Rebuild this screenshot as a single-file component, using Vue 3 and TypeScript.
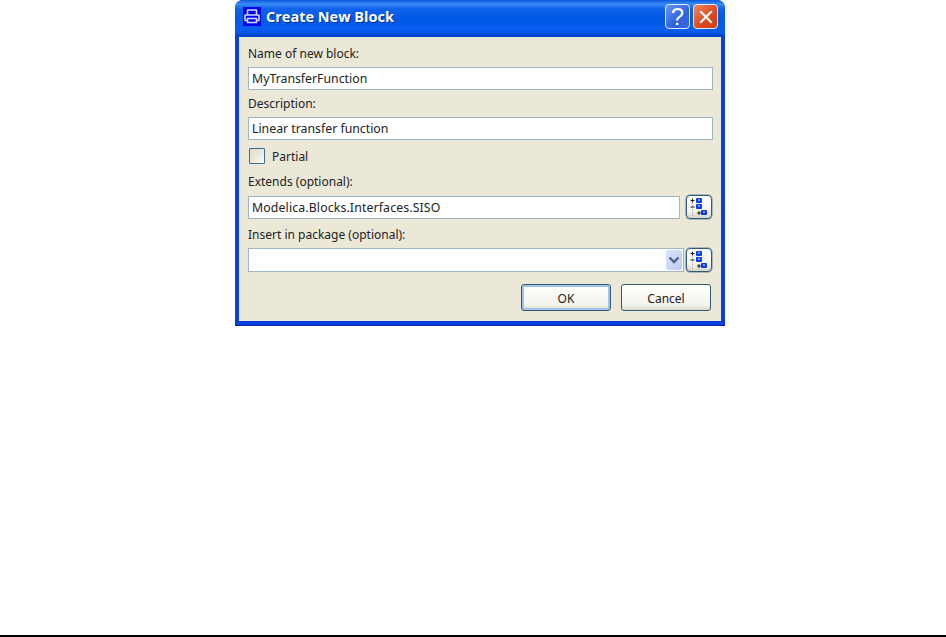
<template>
  <div class="page">
    <div class="window">
      <div class="titlebar">
        <span class="app-icon">
          <svg width="18" height="19" viewBox="0 0 18 19">
            <rect width="18" height="19" fill="#0606e4" />
            <path d="M4.5 8V3.5Q4.5 3 5 3H13Q13.5 3 13.5 3.5V8M4 13.5H2.5Q2 13.5 2 13V8.5Q2 8 2.5 8H15.5Q16 8 16 8.5V13Q16 13.5 15.5 13.5H14M4.5 11.5H13.5V15.5H4.5Z" fill="none" stroke="#cfd8ff" stroke-width="1.6" />
          </svg>
        </span>
        <span class="title">Create New Block</span>
        <button class="cap help">?</button>
        <button class="cap close">
          <svg width="14" height="14" viewBox="0 0 14 14">
            <path d="M2 2L12 12M12 2L2 12" stroke="#fff" stroke-width="2.2" stroke-linecap="square" />
          </svg>
        </button>
      </div>
      <div class="client">
        <label class="lbl">Name of new block:</label>
        <input class="field" :value="name" />
        <label class="lbl second">Description:</label>
        <input class="field desc" :value="description" />
        <div class="check-row">
          <span class="check"></span>
          <span>Partial</span>
        </div>
        <label class="lbl third">Extends (optional):</label>
        <div class="row">
          <input class="field grow" :value="extendsFrom" />
          <button class="browse" v-html="treeIcon"></button>
        </div>
        <label class="lbl fourth">Insert in package (optional):</label>
        <div class="row">
          <div class="combo">
            <span class="arrow">
              <svg width="12" height="8" viewBox="0 0 12 8">
                <path d="M1.5 1.5L6 6L10.5 1.5" fill="none" stroke="#4d6185" stroke-width="2.4" />
              </svg>
            </span>
          </div>
          <button class="browse" v-html="treeIcon"></button>
        </div>
        <div class="actions">
          <button class="btn default">OK</button>
          <button class="btn">Cancel</button>
        </div>
      </div>
    </div>
    <div class="rule"></div>
  </div>
</template>

<script setup lang="ts">
const name = 'MyTransferFunction'
const description = 'Linear transfer function'
const extendsFrom = 'Modelica.Blocks.Interfaces.SISO'

// same little tree icon on both browse buttons
const treeIcon = `<svg width="18" height="18" viewBox="0 0 18 18">
  <path d="M2.5 5V18" stroke="#a8a898" stroke-width="1" stroke-dasharray="1 1" />
  <path d="M0.5 2.5H4.5M2.5 0.5V4.5M0.5 9H4.5M7 15H11M9 13V17" stroke="#1c1c1c" stroke-width="1" />
  <rect x="6" y="0" width="6" height="5" rx="1" fill="#0a3cf0" />
  <rect x="8" y="1" width="2" height="2" fill="#6f9cff" />
  <rect x="6" y="6" width="6" height="5" rx="1" fill="#0a3cf0" />
  <rect x="8" y="7" width="2" height="2" fill="#6f9cff" />
  <rect x="11" y="12" width="6" height="5" rx="1" fill="#0a3cf0" />
  <rect x="13" y="13" width="2" height="2" fill="#6f9cff" />
</svg>`
</script>

<style>
html,
body {
  margin: 0;
  background: #fff;
  overflow: hidden;
}
</style>

<style scoped>
.page {
  height: 637px;
  display: flex;
  flex-direction: column;
  justify-content: space-between;
  font-family: "Noto Sans", "Open Sans", sans-serif;
  font-size: 12px;
  color: #222;
}

.window {
  width: 490px;
  height: 326px;
  margin-left: 235px;
  box-sizing: border-box;
  display: flex;
  flex-direction: column;
  background: #0a3fdc;
  border-bottom: 1px solid #0a2aa8;
  border-radius: 8px 8px 0 0;
  overflow: hidden;
}

.titlebar {
  height: 37px;
  flex: none;
  box-sizing: border-box;
  display: flex;
  align-items: center;
  padding: 0 7px 4px 8px;
  background: linear-gradient(#0a58dc 0, #3a8cf6 4px, #0f62ea 9px, #0058e6 20px, #0a5ef0 30px, #0043c8 37px);
}

.app-icon {
  width: 18px;
  height: 19px;
  flex: none;
  display: flex;
}

.title {
  flex: 1;
  margin-left: 5px;
  font-family: "Open Sans", "Noto Sans", sans-serif;
  font-weight: 700;
  font-size: 14.5px;
  color: #fff;
  text-shadow: 1px 1px 0 #0a2f9c;
}

.cap {
  width: 25px;
  height: 25px;
  flex: none;
  padding: 0;
  border: 1px solid #dfe9ff;
  border-radius: 4px;
  display: flex;
  align-items: center;
  justify-content: center;
  font-family: "Liberation Sans", sans-serif;
  font-size: 24px;
  line-height: 1;
  color: #fff;
}

.help {
  background: linear-gradient(135deg, #6a96f0, #2f62dc 60%, #3468e0);
}

.close {
  margin-left: 3px;
  background: linear-gradient(135deg, #ee8a66, #d9481c 60%, #d04010);
}

.client {
  flex: 1;
  margin: 0 4px 4px;
  padding: 9px 8px 0 9px;
  background: #ebe8d8;
  display: flex;
  flex-direction: column;
}

.lbl {
  height: 16px;
  line-height: 16px;
  margin-bottom: 5px;
}

.second {
  margin-top: 6px;
  margin-bottom: 5px;
}

.third {
  margin-top: 10px;
  margin-bottom: 5px;
}

.fourth {
  margin-top: 8px;
  margin-bottom: 5px;
}

.field {
  height: 23px;
  box-sizing: border-box;
  width: 100%;
  padding: 0 3px;
  border: 1px solid #a0b4c8;
  background: #fff;
  font: inherit;
  font-size: 12.3px;
  color: #222;
  outline: none;
}

.check-row {
  height: 16px;
  margin: 8px 0 0 1px;
  display: flex;
  align-items: center;
  gap: 7px;
}

.check {
  width: 16px;
  height: 16px;
  box-sizing: border-box;
  border: 1px solid #3e6a8c;
  border-radius: 1px;
  background: linear-gradient(135deg, #dedacb, #f8f8f4);
}

.row {
  height: 24px;
  display: flex;
  align-items: center;
  justify-content: space-between;
}

.grow {
  flex: 1;
  width: auto;
  min-width: 0;
  margin-right: 6px;
  letter-spacing: 0.13px;
}

.combo {
  width: 436px;
  height: 24px;
  flex: none;
  box-sizing: border-box;
  border: 1px solid #a0b4c8;
  background: #fff;
  display: flex;
  justify-content: flex-end;
  align-items: center;
  padding-right: 1px;
}

.arrow {
  width: 16px;
  height: 20px;
  background: linear-gradient(135deg, #dbe4f8, #bccdf2);
  border-radius: 2px;
  display: flex;
  align-items: center;
  justify-content: center;
}

.browse {
  width: 26px;
  height: 24px;
  flex: none;
  margin-right: 1px;
  padding: 0;
  border: 1px solid #2f5a78;
  border-radius: 4px;
  background: linear-gradient(#fff, #f4f3ea 70%, #d8d5c6);
  box-shadow: 0 0 0 0.5px #5f8aa8;
  display: flex;
  align-items: center;
  justify-content: center;
}

.actions {
  margin-top: 12px;
  padding-right: 2px;
  display: flex;
  justify-content: flex-end;
  gap: 10px;
}

.btn {
  width: 90px;
  height: 27px;
  padding: 1px 0 0;
  border: 1px solid #2f5a78;
  border-radius: 3px;
  background: linear-gradient(#fff, #f3f2ea 80%, #dcd9ca);
  font: inherit;
  color: #222;
}

.default {
  box-shadow: inset 0 0 0 2px #a4bfe8;
}

.rule {
  height: 2px;
  flex: none;
  background: #000;
}
</style>
